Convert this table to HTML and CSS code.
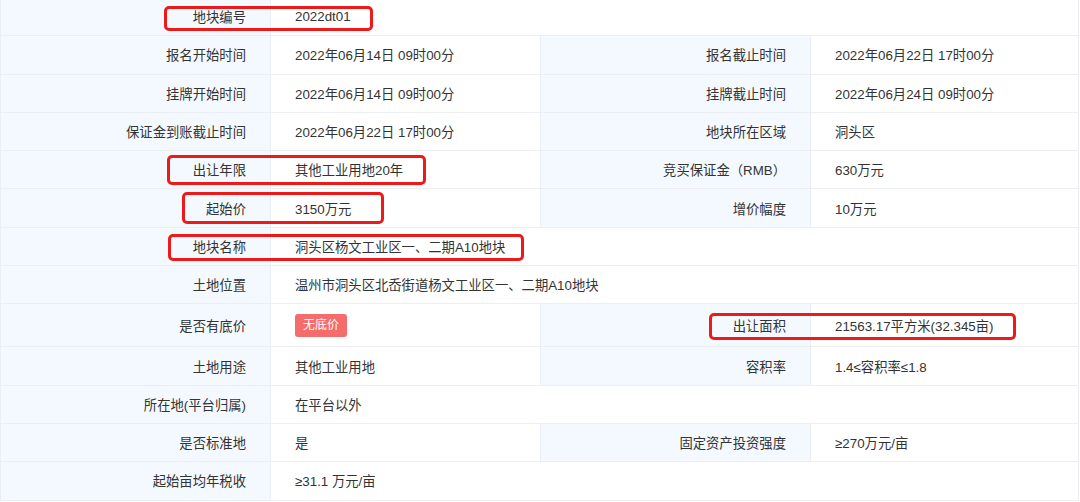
FILE: index.html
```html
<!DOCTYPE html>
<html lang="zh-CN">
<head>
    <meta charset="UTF-8">
    <meta name="viewport" content="width=device-width, initial-scale=1.0">
    <title>地块详情</title>
    <link rel="stylesheet" href="styles.css">
</head>
<body>
    <div class="page">
        <div class="sheet">
            <div class="row wide">
                <div class="label">地块编号</div>
                <div class="value">2022dt01</div>
            </div>
            <div class="row">
                <div class="label">报名开始时间</div>
                <div class="value">2022年06月14日 09时00分</div>
                <div class="label">报名截止时间</div>
                <div class="value">2022年06月22日 17时00分</div>
            </div>
            <div class="row">
                <div class="label">挂牌开始时间</div>
                <div class="value">2022年06月14日 09时00分</div>
                <div class="label">挂牌截止时间</div>
                <div class="value">2022年06月24日 09时00分</div>
            </div>
            <div class="row">
                <div class="label">保证金到账截止时间</div>
                <div class="value">2022年06月22日 17时00分</div>
                <div class="label">地块所在区域</div>
                <div class="value">洞头区</div>
            </div>
            <div class="row">
                <div class="label">出让年限</div>
                <div class="value">其他工业用地20年</div>
                <div class="label">竞买保证金（RMB）</div>
                <div class="value">630万元</div>
            </div>
            <div class="row">
                <div class="label">起始价</div>
                <div class="value">3150万元</div>
                <div class="label">增价幅度</div>
                <div class="value">10万元</div>
            </div>
            <div class="row wide">
                <div class="label">地块名称</div>
                <div class="value">洞头区杨文工业区一、二期A10地块</div>
            </div>
            <div class="row wide">
                <div class="label">土地位置</div>
                <div class="value">温州市洞头区北岙街道杨文工业区一、二期A10地块</div>
            </div>
            <div class="row tall">
                <div class="label">是否有底价</div>
                <div class="value"><span class="tag">无底价</span></div>
                <div class="label">出让面积</div>
                <div class="value">21563.17平方米(32.345亩)</div>
            </div>
            <div class="row">
                <div class="label">土地用途</div>
                <div class="value">其他工业用地</div>
                <div class="label">容积率</div>
                <div class="value">1.4≤容积率≤1.8</div>
            </div>
            <div class="row wide">
                <div class="label">所在地(平台归属)</div>
                <div class="value">在平台以外</div>
            </div>
            <div class="row">
                <div class="label">是否标准地</div>
                <div class="value">是</div>
                <div class="label">固定资产投资强度</div>
                <div class="value">≥270万元/亩</div>
            </div>
            <div class="row wide">
                <div class="label">起始亩均年税收</div>
                <div class="value">≥31.1 万元/亩</div>
            </div>
        </div>

        <!-- red annotation boxes -->
        <div class="mark mark-code"></div>
        <div class="mark mark-term"></div>
        <div class="mark mark-price"></div>
        <div class="mark mark-name"></div>
        <div class="mark mark-area"></div>
    </div>
</body>
</html>
```

FILE: styles.css
```css
:root {
    --label-bg: #f3f9fe;
    --line-color: #ebeef3;
    --text-color: #333;
    --mark-color: #ee1a1a;
}
body {
    margin: 0;
    padding: 0;
    background: #fff;
    color: var(--text-color);
    font-family: "Liberation Sans", "Noto Sans CJK SC", sans-serif;
    font-size: 13.33px;
    overflow: hidden;
}
.page {
    position: relative;
    width: 1080px;
    height: 502px;
    overflow: hidden;
}
.sheet {
    width: 1079px;
    margin-top: -2px;
    border-left: 1px solid var(--line-color);
    border-right: 1px solid var(--line-color);
    box-sizing: border-box;
}
.row {
    display: grid;
    grid-template-columns: 270px 270px 270px 1fr;
    height: 38.3px;
    box-sizing: border-box;
    border-bottom: 1px solid var(--line-color);
}
.row.wide {
    grid-template-columns: 270px 1fr;
}
.row.tall {
    height: 43px;
}
.label,
.value {
    display: flex;
    align-items: center;
    white-space: nowrap;
}
.label {
    justify-content: flex-end;
    padding-right: 24px;
    background: var(--label-bg);
    border-right: 1px solid var(--line-color);
}
.value {
    padding-left: 24px;
    border-right: 1px solid var(--line-color);
}
.value:last-child {
    border-right: none;
}
.tag {
    display: inline-block;
    height: 23px;
    line-height: 23px;
    padding: 0 8px;
    border-radius: 3px;
    background: #f56c6c;
    color: #fff;
    font-size: 12px;
}
.mark {
    position: absolute;
    border: 3px solid var(--mark-color);
    border-radius: 5px;
    box-sizing: border-box;
}
.mark-code {
    left: 164px;
    top: 6px;
    width: 209px;
    height: 25px;
}
.mark-term {
    left: 167px;
    top: 155px;
    width: 259px;
    height: 30px;
}
.mark-price {
    left: 182px;
    top: 192px;
    width: 202px;
    height: 32px;
}
.mark-name {
    left: 168px;
    top: 234px;
    width: 356px;
    height: 27px;
}
.mark-area {
    left: 709px;
    top: 313px;
    width: 307px;
    height: 27px;
}
```
